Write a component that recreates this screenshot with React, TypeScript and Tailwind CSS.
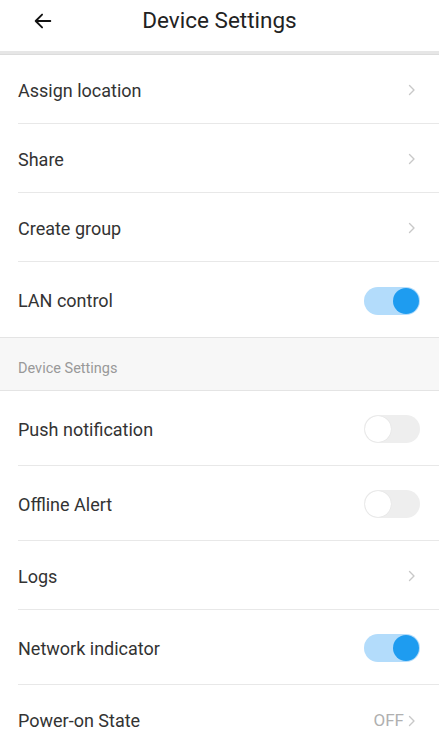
import React from 'react';

type Row =
  | { kind: 'link'; label: string; value?: string }
  | { kind: 'toggle'; label: string; on: boolean };

const Chevron = () => (
  <svg width="8" height="12" viewBox="0 0 8 12" fill="none" className="ml-1">
    <path d="M1.5 1.5L6 6l-4.5 4.5" stroke="#c8c8c8" strokeWidth="1.4" strokeLinecap="round" strokeLinejoin="round" />
  </svg>
);

const Toggle = ({ on }: { on: boolean }) => (
  <div
    className={`relative w-[56px] h-[28px] rounded-full ${on ? 'bg-[#b3dcfb]' : 'bg-[#eeeeee]'}`}
  >
    <div
      className={`absolute top-[1px] w-[26px] h-[26px] rounded-full ${
        on ? 'right-[1px] bg-[#1e9cf0]' : 'left-[1px] bg-white shadow-[0_0_1px_rgba(0,0,0,0.15)]'
      }`}
    />
  </div>
);

const ListRow = ({ row, last }: { row: Row; last?: boolean }) => {
  const tall = row.kind === 'toggle';
  return (
    <div className="pl-[18px]">
      <div
        className={`flex items-center justify-between pt-[2px] ${tall ? 'h-[75px] pr-[19px]' : 'h-[69px] pr-[23px]'} ${
          last ? '' : 'border-b border-[#e8e8e8]'
        }`}
      >
        <span className="text-[18px] text-[#333333]">{row.label}</span>
        {row.kind === 'toggle' ? (
          <Toggle on={row.on} />
        ) : (
          <div className="flex items-center text-[17px] text-[#b0b0b0]">
            {row.value && <span>{row.value}</span>}
            <Chevron />
          </div>
        )}
      </div>
    </div>
  );
};

const topRows: Row[] = [
  { kind: 'link', label: 'Assign location' },
  { kind: 'link', label: 'Share' },
  { kind: 'link', label: 'Create group' },
  { kind: 'toggle', label: 'LAN control', on: true },
];

const bottomRows: Row[] = [
  { kind: 'toggle', label: 'Push notification', on: false },
  { kind: 'toggle', label: 'Offline Alert', on: false },
  { kind: 'link', label: 'Logs' },
  { kind: 'toggle', label: 'Network indicator', on: true },
  { kind: 'link', label: 'Power-on State', value: 'OFF' },
];

export default function App() {
  return (
    <div className="w-[439px] h-[750px] overflow-hidden bg-white font-['Roboto','Liberation_Sans',sans-serif]">
      <div className="relative h-[51px] flex items-center justify-center">
        <button className="absolute left-[28px] top-[6px] p-1">
          <svg width="22" height="22" viewBox="0 0 24 24" fill="none">
            <path d="M20 12H4M11 5l-7 7 7 7" stroke="#111" strokeWidth="2" strokeLinecap="round" strokeLinejoin="round" />
          </svg>
        </button>
        <h1 className="text-[22.5px] text-[#222222] -mt-[10px]">Device Settings</h1>
      </div>
      <div className="h-[4px] bg-[#e6e6e6] border-b border-[#dcdcdc]" />
      <div>
        {topRows.map((r, i) => (
          <ListRow key={r.label} row={r} last={i === topRows.length - 1} />
        ))}
      </div>
      <div className="h-[54px] bg-[#f7f7f7] border-y border-[#e4e4e4] flex items-center pl-[18px] pt-[9px]">
        <span className="text-[14.5px] text-[#999999]">Device Settings</span>
      </div>
      <div>
        {bottomRows.map((r, i) => (
          <ListRow key={r.label} row={r} last={i === bottomRows.length - 1} />
        ))}
      </div>
    </div>
  );
}
